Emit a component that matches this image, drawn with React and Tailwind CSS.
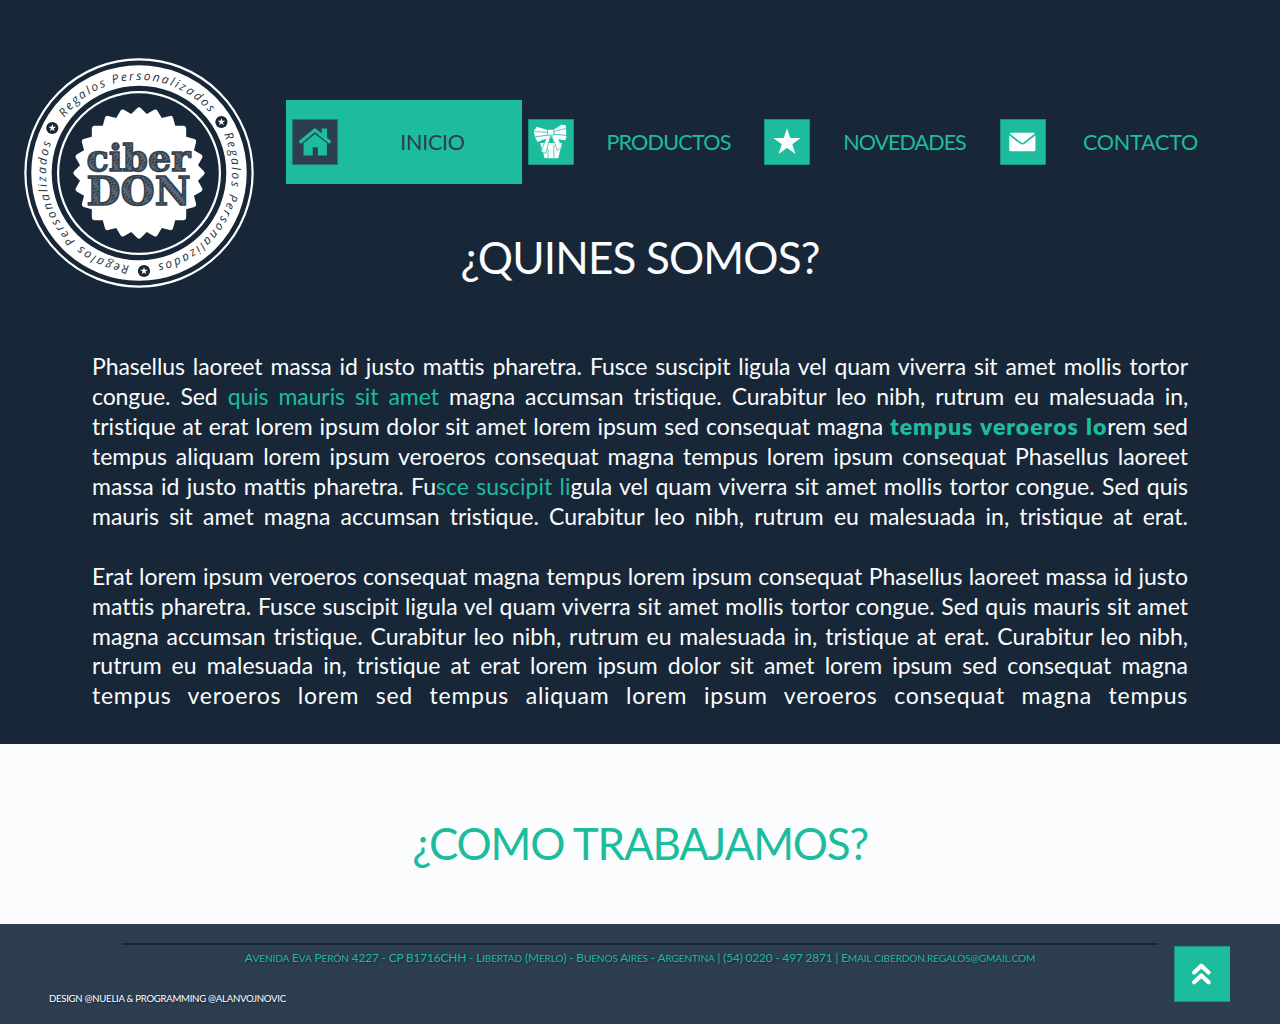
const INK = "#182737";
const MINT = "#1cbc9c";

function Star({ cx, cy, r, fill }) {
  const pts = Array.from({ length: 10 }, (_, i) => {
    const a = (i * Math.PI) / 5;
    const d = i % 2 ? r * 0.39 : r;
    return `${(cx + d * Math.sin(a)).toFixed(2)},${(cy - d * Math.cos(a)).toFixed(2)}`;
  }).join(" ");
  return <polygon points={pts} fill={fill} />;
}

function polar(deg, r) {
  const a = (deg * Math.PI) / 180;
  return [115 + r * Math.sin(a), 115 - r * Math.cos(a)];
}

function arc(from, to, r) {
  const [x1, y1] = polar(from, r);
  const [x2, y2] = polar(to, r);
  return `M${x1} ${y1}A${r} ${r} 0 0 1 ${x2} ${y2}`;
}

function sealPath() {
  let d = "";
  for (let i = 0; i < 24; i++) {
    const a = i * 15;
    const p = [polar(a - 7.5, 59.5), polar(a - 1.5, 65), polar(a, 66.5), polar(a + 1.5, 65)].map((q) => q.join(" "));
    d += `${i ? "L" : "M"}${p[0]}L${p[1]}Q${p[2]} ${p[3]}`;
  }
  return d + "Z";
}

function Logo() {
  return (
    <svg viewBox="0 0 230 230" className="block size-[230px]" aria-label="ciber DON">
      <defs>
        <pattern id="hatch" width="9" height="3.4" patternUnits="userSpaceOnUse" patternTransform="rotate(-42)">
          <rect width="9" height="3.4" fill="#33414f" />
          <path d="M0 .6H6M3 2.4H9" stroke="#a9b0b7" strokeWidth=".6" />
        </pattern>
        {[-53.5, 65.5, 186].map((s, i) => (
          <path key={i} id={`arc${i}`} d={arc(s, s + 106, 93)} />
        ))}
      </defs>
      <circle cx="115" cy="115" r="113.6" fill="none" stroke="#fff" strokeWidth="2.2" />
      <circle cx="115" cy="115" r="97.5" fill="none" stroke="#fff" strokeWidth="20.4" />
      <circle cx="115" cy="115" r="80.9" fill="none" stroke="#fff" strokeWidth="2.2" />
      <path d={sealPath()} fill="#fff" />
      {[0, 1, 2].map((i) => (
        <text key={i} fill="#243342" className="font-['Open_Sans',sans-serif] text-[12px] italic">
          <textPath href={`#arc${i}`} textLength="167" lengthAdjust="spacing">
            Regalos Personalizados
          </textPath>
        </text>
      ))}
      {[[28.3, 70], [197.4, 64], [120, 213]].map(([x, y]) => (
        <g key={x}>
          <circle cx={x} cy={y} r="6.1" fill={INK} />
          <Star cx={x} cy={y} r={4} fill="#fff" />
        </g>
      ))}
      <g fill="url(#hatch)" stroke="#33414f" strokeWidth="1.5" className="font-['DejaVu_Serif',serif] font-bold">
        <text x="62.5" y="112.6" textLength="104" lengthAdjust="spacingAndGlyphs" className="text-[37.5px]">ciber</text>
        <text x="62.5" y="146.6" textLength="104" lengthAdjust="spacingAndGlyphs" className="text-[39.5px]">DON</text>
      </g>
    </svg>
  );
}

function HomeIcon() {
  return (
    <svg viewBox="0 0 46 46" className="block size-full" fill={MINT}>
      <path d="M30 9h5.6v12L30 16z" />
      <path d="M7 23.6 23 10.6l16 13" fill="none" stroke={MINT} strokeWidth="3.6" strokeLinejoin="round" />
      <path d="M11 24 23 14.6 35.5 24V37H26v-8.6h-5.4V37H11z" />
      <path d="M8.4 25.5 23 13.5l14.8 12" fill="none" stroke="#2d3e50" strokeWidth="1" />
    </svg>
  );
}

function GiftIcon() {
  return (
    <svg viewBox="0 0 46 46" className="block size-full" fill="#fafcfe">
      <path d="M11.5 24h23L30.5 40h-14z" />
      <path d="M19.5 10.5 8 7 5 12l1.2 5.5L19.5 16zM26 10l8-5 4.5.6L39 16l-13-1z" />
      <path d="M19.5 16 6.2 17.8 9 23l9-3.6L12.5 33l5 1.5L23 16zM26 15l13.5 1.2-1.7 5-7.3-1 3.8 8L29.5 32 23 16z" />
      <path d="M19.5 9.8h6.5v6h-6.5z" />
      <path
        d="M5.4 12l14.1 1M6.2 17.6l13.3-1.8M26 12l13.5-3.3M26 14.8l13.5 1.4M19.5 9.8h6.5v6h-6.5zM17.5 20.5l-5 12.5 5 2L22.5 16.5M24 17l5.7 15 5-4.3M20 30v10M26 26v14"
        fill="none"
        stroke={MINT}
        strokeWidth=".7"
      />
    </svg>
  );
}

function StarIcon() {
  return (
    <svg viewBox="0 0 46 46" className="block size-full">
      <Star cx={23} cy={23.5} r={15} fill="#fafcfe" />
    </svg>
  );
}

function MailIcon() {
  return (
    <svg viewBox="0 0 46 46" className="block size-full">
      <rect x="8.6" y="13.4" width="27.4" height="19.4" rx="1.8" fill="#fafcfe" />
      <path d="m8 14.4 12.6 9.8q1.8 1.2 3.6 0l12.4-9.8" fill="none" stroke={MINT} strokeWidth="1.8" />
    </svg>
  );
}

const NAV = [
  { label: "INICIO", Icon: HomeIcon, active: true, track: "tracking-[-0.3px]" },
  { label: "PRODUCTOS", Icon: GiftIcon, track: "tracking-[-0.8px]" },
  { label: "NOVEDADES", Icon: StarIcon, track: "tracking-[-1px]" },
  { label: "CONTACTO", Icon: MailIcon, track: "tracking-[-0.25px]" },
];

const G = ({ children }) => <span className="text-[#1cbc9c]">{children}</span>;

const FIRST = [
  <span className="tracking-[-0.1px]">Phasellus laoreet massa id justo mattis pharetra. Fusce suscipit ligula vel quam viverra sit amet mollis tortor</span>,
  <span className="tracking-[-0.1px]">congue. Sed <G>quis mauris sit amet</G> magna accumsan tristique. Curabitur leo nibh, rutrum eu malesuada in,</span>,
  <>tristique at erat lorem ipsum dolor sit amet lorem ipsum sed consequat magna <b className="font-extrabold tracking-[1px] text-[#1cbc9c]">tempus veroeros lo</b>rem sed</>,
  "tempus aliquam lorem ipsum veroeros consequat magna tempus lorem ipsum consequat Phasellus laoreet",
  <>massa id justo mattis pharetra. Fu<G>sce suscipit li</G>gula vel quam viverra sit amet mollis tortor congue. Sed quis</>,
  "mauris sit amet magna accumsan tristique. Curabitur leo nibh, rutrum eu malesuada in, tristique at erat.",
];

const SECOND = [
  "Erat lorem ipsum veroeros consequat magna tempus lorem ipsum consequat Phasellus laoreet massa id justo",
  "mattis pharetra. Fusce suscipit ligula vel quam viverra sit amet mollis tortor congue. Sed quis mauris sit amet",
  "magna accumsan tristique. Curabitur leo nibh, rutrum eu malesuada in, tristique at erat. Curabitur leo nibh,",
  "rutrum eu malesuada in, tristique at erat lorem ipsum dolor sit amet lorem ipsum sed consequat magna",
  <span className="tracking-[0.75px]">tempus veroeros lorem sed tempus aliquam lorem ipsum veroeros consequat magna tempus</span>,
];

function Lines({ lines }) {
  return (
    <p>
      {lines.map((l, i) => (
        <span key={i} className="block whitespace-nowrap text-justify [text-align-last:justify]">{l}</span>
      ))}
    </p>
  );
}

const ADDRESS =
  "Avenida Eva Perón 4227 - CP B1716CHH - Libertad (Merlo) - Buenos Aires - Argentina | (54) 0220 - 497 2871 | Email ciberdon.regalos@gmail.com";

function SmallCaps({ text }) {
  return text
    .split(/([a-zó.@]{2,})/)
    .map((part, i) => (i % 2 ? <span key={i} className="text-[10.2px] uppercase">{part}</span> : part));
}

export default function App() {
  return (
    <div className="flex h-[1024px] w-[1280px] flex-col overflow-hidden bg-[#182737] font-['Lato',sans-serif] [font-variant-ligatures:none]">
      <section className="h-[744px] shrink-0 text-[#fafcfe]">
        <header className="flex h-[230px]">
          <div className="ml-6 mt-[58px] h-[172px] w-[262px] shrink-0">
            <Logo />
          </div>
          <nav className="mt-[100px] flex h-[84px]">
            {NAV.map(({ label, Icon, active, track }) => (
              <a key={label} className={active ? "flex w-[236px] items-center bg-[#1cbc9c] pl-[6.4px] text-[#2d3e50]" : "flex w-[236px] items-center pl-[6.4px] text-[#1cbc9c]"}>
                <span className={active ? "size-[46px] border border-[#25776f] bg-[#2d3e50]" : "size-[46px] border border-[#1b947f] bg-[#1cbc9c]"}>
                  <Icon />
                </span>
                <span className={`ml-[4.6px] flex-1 text-center text-[21.6px] leading-[30px] ${track}`}>{label}</span>
              </a>
            ))}
          </nav>
        </header>
        <h1 className="text-center text-[44px] leading-[54px] tracking-[-0.85px]">¿QUINES SOMOS?</h1>
        <div className="mx-[92px] mt-[68px] flex flex-col gap-[30.3px] text-[23px] leading-[29.9px]">
          <Lines lines={FIRST} />
          <Lines lines={SECOND} />
        </div>
      </section>
      <section className="h-[180px] shrink-0 bg-[#fafcfe] pt-[72px] text-[#1cbc9c]">
        <h2 className="text-center text-[44px] leading-[54px] tracking-[-1.25px]">¿COMO TRABAJAMOS?</h2>
      </section>
      <footer className="flex h-[100px] shrink-0 bg-[#2d3e50]">
        <div className="flex w-[1174px] flex-col">
          <div className="ml-[122px] mt-[19px] h-0.5 w-[1036px] bg-[#182737]" />
          <p className="ml-[122px] mt-[5px] w-[1036px] whitespace-nowrap text-center text-[12px] leading-4 tracking-[-0.21px] text-[#1cbc9c] [text-shadow:1px_1px_2px_#182737]">
            <SmallCaps text={ADDRESS} />
          </p>
          <p className="ml-[49px] mt-[25px] text-[9.6px] leading-4 tracking-[-0.28px] text-white [text-shadow:1px_1px_2px_#182737]">DESIGN @NUELIA &amp; PROGRAMMING @ALANVOJNOVIC</p>
        </div>
        <a className="mt-[22px] flex size-14 items-center justify-center border border-r-0 border-[#20927f] bg-[#1cbc9c]">
          <svg viewBox="0 0 56 56" className="size-full" fill="none" stroke="#fff" strokeWidth="4.4" strokeLinecap="round" strokeLinejoin="round">
            <path d="m19.3 26.5 7.5-7 7.5 7M19.3 36.5l7.5-7 7.5 7" />
          </svg>
        </a>
      </footer>
    </div>
  );
}
